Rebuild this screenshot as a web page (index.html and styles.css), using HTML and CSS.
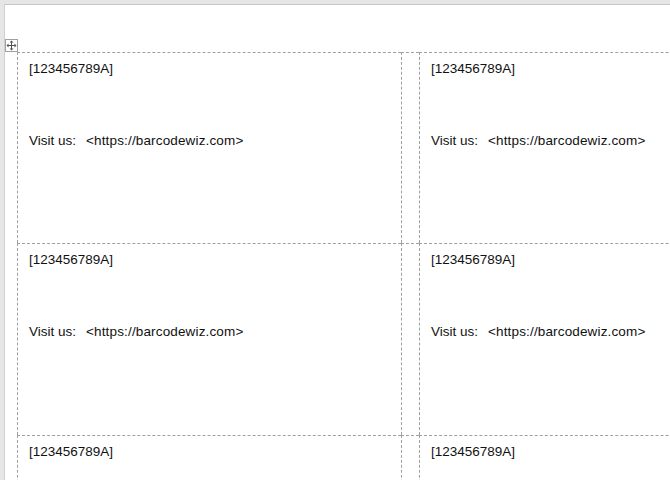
FILE: index.html
```html
<!DOCTYPE html>
<html>
<head>
<meta charset="utf-8">
<link rel="stylesheet" href="styles.css">
</head>
<body>
<div class="page">
  <div class="handle">
    <svg width="11" height="11" viewBox="0 0 11 11">
      <path d="M5.5 1v9M1 5.5h9" stroke="#555" stroke-width="1" fill="none"/>
      <path d="M5.5 0.5l-2 2h4z M5.5 10.5l-2-2h4z M0.5 5.5l2-2v4z M10.5 5.5l-2-2v4z" fill="#555"/>
    </svg>
  </div>
  <div class="labels">
    <div class="cell"><p class="code">[123456789A]</p><p class="visit">Visit us:<span class="url">&lt;https://barcodewiz.com&gt;</span></p></div>
    <div class="cell gap"></div>
    <div class="cell"><p class="code">[123456789A]</p><p class="visit">Visit us:<span class="url">&lt;https://barcodewiz.com&gt;</span></p></div>
    <div class="cell"><p class="code">[123456789A]</p><p class="visit">Visit us:<span class="url">&lt;https://barcodewiz.com&gt;</span></p></div>
    <div class="cell gap"></div>
    <div class="cell"><p class="code">[123456789A]</p><p class="visit">Visit us:<span class="url">&lt;https://barcodewiz.com&gt;</span></p></div>
    <div class="cell"><p class="code">[123456789A]</p></div>
    <div class="cell gap"></div>
    <div class="cell"><p class="code">[123456789A]</p></div>
  </div>
</div>
</body>
</html>
```
FILE: styles.css
```css
html, body {
  margin: 0;
  padding: 0;
  overflow: hidden;
  width: 670px;
  height: 480px;
}
body {
  background: #e6e6e6;
  font-family: "Liberation Sans", Arial, sans-serif;
  font-size: 13.5px;
  color: #111;
}
.page {
  position: relative;
  margin: 4px 0 0 4px;
  background: #fff;
  border-top: 1px solid #c6c6c6;
  border-left: 1px solid #d0d0d0;
  width: 666px;
  height: 476px;
  padding: 47px 0 0 12px;
  box-sizing: border-box;
  overflow: hidden;
}
.handle {
  position: absolute;
  left: 0;
  top: 34px;
  width: 11px;
  height: 11px;
  border: 1px solid #a0a0a0;
  background: #fff;
  display: flex;
}
.labels {
  display: grid;
  grid-template-columns: 384px 18px 320px;
  grid-template-rows: 191px 192px 192px;
  width: 722px;
}
.cell {
  box-sizing: border-box;
  border-left: 1px dashed #a0a0a0;
  border-top: 1px dashed #a0a0a0;
  padding: 7px 0 0 11px;
  overflow: hidden;
  white-space: nowrap;
}
.cell p {
  margin: 0;
  line-height: 18px;
}
.cell .visit {
  margin-top: 54px;
}
.url {
  margin-left: 10px;
  letter-spacing: 0.15px;
}
```
